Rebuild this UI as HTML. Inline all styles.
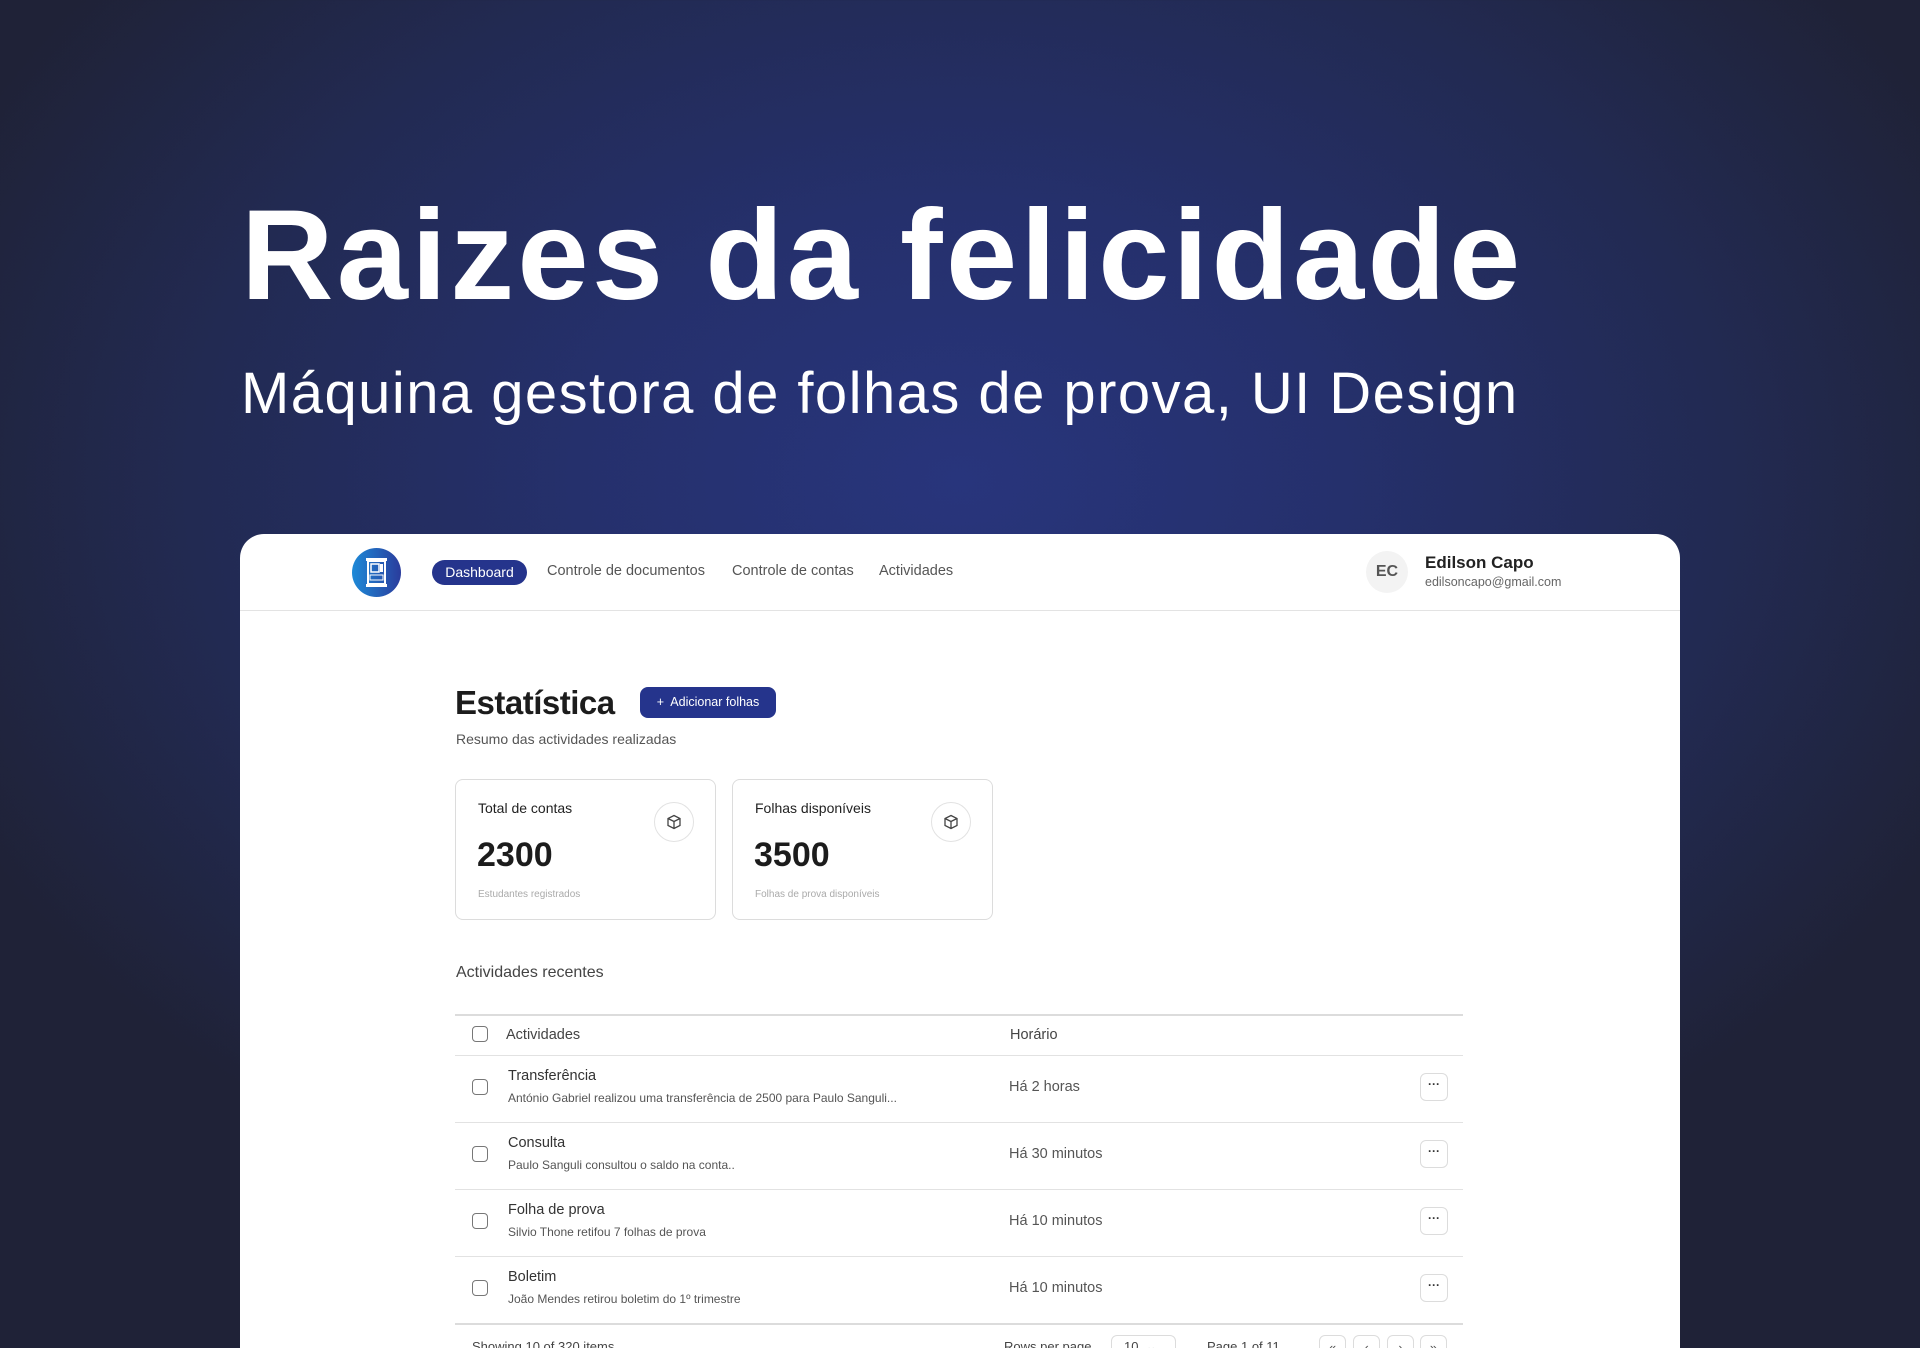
<!DOCTYPE html>
<html style="width:1920px;height:1348px;overflow:hidden"><head><meta charset="utf-8"><style>
*{margin:0;padding:0;box-sizing:border-box}
body{width:1920px;height:1348px;overflow:hidden;position:relative;font-family:"Liberation Sans",sans-serif;
background:radial-gradient(ellipse 1100px 800px at 960px 480px,#28357c 0%,#25306c 35%,#222a52 70%,#1f2237 100%);}
.a{position:absolute;white-space:nowrap}
h1{position:absolute;left:241px;top:192px;font-size:128px;line-height:128px;letter-spacing:3.3px;color:#fff;font-weight:700}
.sub{position:absolute;left:241px;top:365px;font-size:58px;line-height:58px;letter-spacing:1.45px;color:#fff}
.card{position:absolute;left:240px;top:534px;width:1440px;height:814px;background:#fff;border-radius:24px 24px 0 0}
.nl{font-size:14.5px;color:#555;top:563px}
.stat{position:absolute;top:779px;width:261px;height:141px;border:1px solid #dcdcdc;border-radius:8px}
.ic{position:absolute;right:21px;top:22px;width:40px;height:40px;border:1px solid #e2e2e2;border-radius:50%;display:flex;align-items:center;justify-content:center}
.line{position:absolute;left:455px;width:1008px;height:1px;background:#e2e2e2}
.cb{position:absolute;left:472px;width:16px;height:16px;border:1.5px solid #777;border-radius:4px}
.t{font-size:14.5px;color:#333;left:508px}
.d{font-size:12px;color:#555;left:508px}
.h{font-size:14.5px;color:#555;left:1009px}
.dots{position:absolute;left:1420px;width:28px;height:28px;border:1px solid #dcdcdc;border-radius:6px;font-size:12px;color:#333;text-align:center;line-height:20px;font-weight:700}
.pb{position:absolute;top:1335px;width:27px;height:27px;border:1px solid #dcdcdc;border-radius:6px;font-size:13px;color:#555;text-align:center;line-height:24px}
</style></head><body>
<h1>Raizes da felicidade</h1>
<div class="sub">Máquina gestora de folhas de prova, UI Design</div>
<div class="card"></div>
<div class="a" style="left:352px;top:548px;width:49px;height:49px;border-radius:50%;background:linear-gradient(90deg,#1d8ad8,#2a3c9c)"></div>
<svg class="a" style="left:364px;top:557px" width="25" height="31" viewBox="0 0 25 31"><rect x="2" y="1" width="21" height="3" fill="#fff"/><rect x="4" y="4" width="17" height="23" fill="none" stroke="#fff" stroke-width="2"/><rect x="7" y="7" width="8" height="8" fill="none" stroke="#fff" stroke-width="1.5"/><rect x="16" y="7" width="3" height="8" fill="#fff"/><rect x="6" y="18" width="13" height="5" fill="none" stroke="#fff" stroke-width="1"/><rect x="2" y="27" width="21" height="3" fill="#fff"/></svg>
<div class="a" style="left:432px;top:560px;width:95px;height:25px;border-radius:13px;background:#25348c;color:#fff;font-size:14px;line-height:25px;text-align:center">Dashboard</div>
<div class="a nl" style="left:547px">Controle de documentos</div>
<div class="a nl" style="left:732px">Controle de contas</div>
<div class="a nl" style="left:879px">Actividades</div>
<div class="a" style="left:1366px;top:551px;width:42px;height:42px;border-radius:50%;background:#f3f3f3;color:#555;font-size:16px;font-weight:700;line-height:42px;text-align:center">EC</div>
<div class="a" style="left:1425px;top:553px;font-size:17px;font-weight:700;color:#222">Edilson Capo</div>
<div class="a" style="left:1425px;top:575px;font-size:12.5px;color:#666">edilsoncapo@gmail.com</div>
<div class="a" style="left:240px;top:610px;width:1440px;height:1px;background:#e3e3e3"></div>

<div class="a" style="left:455px;top:684px;font-size:33px;font-weight:700;color:#1c1c1c;letter-spacing:-0.5px">Estatística</div>
<div class="a" style="left:640px;top:687px;width:136px;height:31px;border-radius:8px;background:#25348c;color:#fff;font-size:12.5px;line-height:31px;text-align:center">+&nbsp; Adicionar folhas</div>
<div class="a" style="left:456px;top:731px;font-size:14px;color:#555">Resumo das actividades realizadas</div>

<div class="stat" style="left:455px"><div class="a" style="left:22px;top:20px;font-size:14px;color:#222">Total de contas</div><div class="ic"><svg width="16" height="16" viewBox="0 0 16 16" fill="none" stroke="#444" stroke-width="1.3"><path d="M8 1.5L14 4.5V11.5L8 14.5L2 11.5V4.5Z M2 4.5L8 7.5L14 4.5 M8 7.5V14.5"/></svg></div><div class="a" style="left:21px;top:56px;font-size:34px;font-weight:700;color:#1c1c1c">2300</div><div class="a" style="left:22px;top:109px;font-size:10px;color:#aaa">Estudantes registrados</div></div>
<div class="stat" style="left:732px"><div class="a" style="left:22px;top:20px;font-size:14px;color:#222">Folhas disponíveis</div><div class="ic"><svg width="16" height="16" viewBox="0 0 16 16" fill="none" stroke="#444" stroke-width="1.3"><path d="M8 1.5L14 4.5V11.5L8 14.5L2 11.5V4.5Z M2 4.5L8 7.5L14 4.5 M8 7.5V14.5"/></svg></div><div class="a" style="left:21px;top:56px;font-size:34px;font-weight:700;color:#1c1c1c">3500</div><div class="a" style="left:22px;top:109px;font-size:10px;color:#aaa">Folhas de prova disponíveis</div></div>

<div class="a" style="left:456px;top:964px;font-size:16px;color:#444">Actividades recentes</div>
<div class="line" style="top:1014px;height:2px;background:#dcdcdc"></div>
<div class="cb" style="top:1026px"></div>
<div class="a" style="left:506px;top:1027px;font-size:14.5px;color:#444">Actividades</div>
<div class="a" style="left:1010px;top:1027px;font-size:14.5px;color:#444">Horário</div>
<div class="line" style="top:1055px"></div>

<div class="cb" style="top:1079px"></div><div class="a t" style="top:1068px">Transferência</div><div class="a d" style="top:1091px">António Gabriel realizou uma transferência de 2500 para Paulo Sanguli...</div><div class="a h" style="top:1079px">Há 2 horas</div><div class="dots" style="top:1073px">···</div>
<div class="line" style="top:1122px"></div>
<div class="cb" style="top:1146px"></div><div class="a t" style="top:1135px">Consulta</div><div class="a d" style="top:1158px">Paulo Sanguli consultou o saldo na conta..</div><div class="a h" style="top:1146px">Há 30 minutos</div><div class="dots" style="top:1140px">···</div>
<div class="line" style="top:1189px"></div>
<div class="cb" style="top:1213px"></div><div class="a t" style="top:1202px">Folha de prova</div><div class="a d" style="top:1225px">Silvio Thone retifou 7 folhas de prova</div><div class="a h" style="top:1213px">Há 10 minutos</div><div class="dots" style="top:1207px">···</div>
<div class="line" style="top:1256px"></div>
<div class="cb" style="top:1280px"></div><div class="a t" style="top:1269px">Boletim</div><div class="a d" style="top:1292px">João Mendes retirou boletim do 1º trimestre</div><div class="a h" style="top:1280px">Há 10 minutos</div><div class="dots" style="top:1274px">···</div>
<div class="line" style="top:1323px;height:2px;background:#dcdcdc"></div>

<div class="a" style="left:472px;top:1339px;font-size:13px;color:#444">Showing 10 of 320 items</div>
<div class="a" style="left:1004px;top:1339px;font-size:13px;color:#444">Rows per page</div>
<div class="pb" style="left:1111px;width:65px"></div>
<div class="a" style="left:1124px;top:1339px;font-size:13px;color:#444">10 &nbsp;⌄</div>
<div class="a" style="left:1207px;top:1339px;font-size:13px;color:#444">Page 1 of 11</div>
<div class="pb" style="left:1319px">«</div><div class="pb" style="left:1353px">‹</div><div class="pb" style="left:1387px">›</div><div class="pb" style="left:1420px">»</div>
</body></html>
